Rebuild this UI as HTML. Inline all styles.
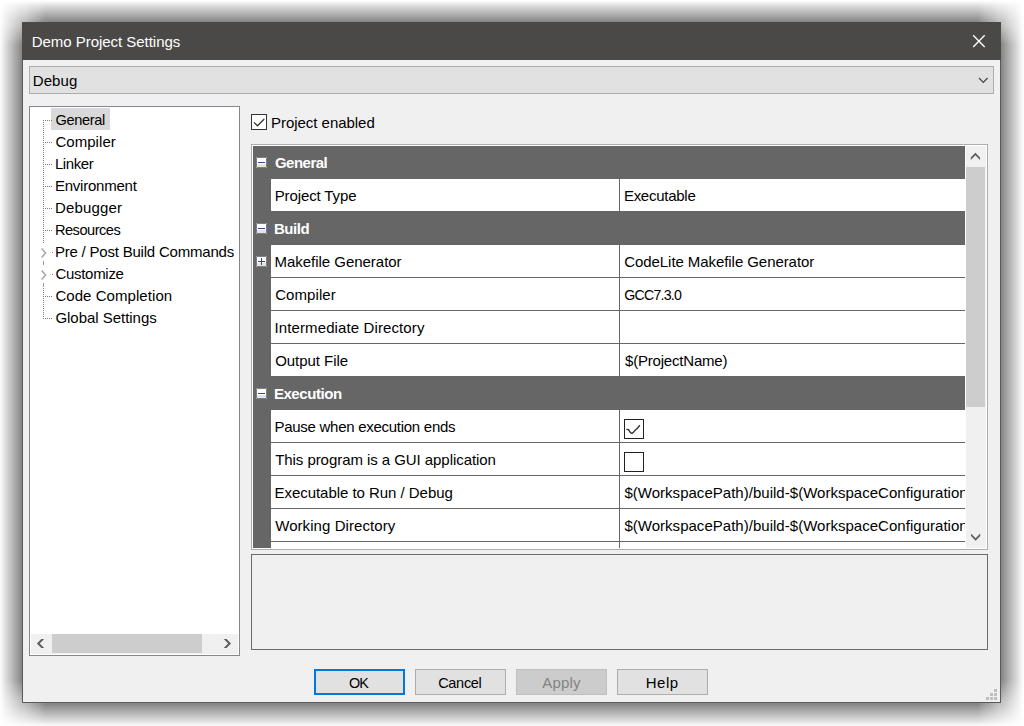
<!DOCTYPE html>
<html lang="en">
<head>
<meta charset="utf-8">
<title>Demo Project Settings</title>
<style>
html,body{margin:0;padding:0;background:#fff;}
body{width:1024px;height:726px;position:relative;overflow:hidden;
  font-family:"Liberation Sans",sans-serif;font-size:15.0px;color:#000;}
*{box-sizing:border-box;}
.win *{position:absolute;}
.win{position:absolute;left:22px;top:22px;width:979px;height:681px;background:#f0f0f0;
  border:1px solid #5c5a58;border-top:none;
}
.shadow{position:absolute;left:0;top:0;width:1024px;height:726px;background:linear-gradient(to right,rgba(0,0,0,0.000) -1.0px,rgba(0,0,0,0.040) 1.5px,rgba(0,0,0,0.135) 5.5px,rgba(0,0,0,0.255) 11.5px,rgba(0,0,0,0.360) 16.5px,rgba(0,0,0,0.465) 21.5px,rgba(0,0,0,0.470) 22.5px,rgba(0,0,0,0.475) 23.5px,rgba(0,0,0,0.580) 28.5px,rgba(0,0,0,0.685) 33.5px,rgba(0,0,0,0.805) 39.5px,rgba(0,0,0,0.900) 43.5px,rgba(0,0,0,0.940) 46.0px,rgba(0,0,0,0.940) 977.0px,rgba(0,0,0,0.900) 979.5px,rgba(0,0,0,0.805) 983.5px,rgba(0,0,0,0.685) 989.5px,rgba(0,0,0,0.580) 994.5px,rgba(0,0,0,0.475) 999.5px,rgba(0,0,0,0.470) 1000.5px,rgba(0,0,0,0.465) 1001.5px,rgba(0,0,0,0.360) 1006.5px,rgba(0,0,0,0.255) 1011.5px,rgba(0,0,0,0.135) 1017.5px,rgba(0,0,0,0.040) 1021.5px,rgba(0,0,0,0.000) 1024.0px);-webkit-mask-image:linear-gradient(to bottom,rgba(0,0,0,0.000) 0.3px,rgba(0,0,0,0.048) 2.5px,rgba(0,0,0,0.138) 5.5px,rgba(0,0,0,0.271) 11.5px,rgba(0,0,0,0.383) 16.5px,rgba(0,0,0,0.495) 21.5px,rgba(0,0,0,0.500) 22.5px,rgba(0,0,0,0.505) 23.5px,rgba(0,0,0,0.617) 28.5px,rgba(0,0,0,0.729) 33.5px,rgba(0,0,0,0.862) 39.5px,rgba(0,0,0,0.952) 42.5px,rgba(0,0,0,1.000) 44.7px,rgba(0,0,0,1.000) 680.0px,rgba(0,0,0,0.957) 682.5px,rgba(0,0,0,0.856) 686.5px,rgba(0,0,0,0.729) 692.5px,rgba(0,0,0,0.617) 697.5px,rgba(0,0,0,0.505) 702.5px,rgba(0,0,0,0.500) 703.5px,rgba(0,0,0,0.495) 704.5px,rgba(0,0,0,0.383) 709.5px,rgba(0,0,0,0.271) 714.5px,rgba(0,0,0,0.144) 720.5px,rgba(0,0,0,0.043) 724.5px,rgba(0,0,0,0.000) 727.0px);mask-image:linear-gradient(to bottom,rgba(0,0,0,0.000) 0.3px,rgba(0,0,0,0.048) 2.5px,rgba(0,0,0,0.138) 5.5px,rgba(0,0,0,0.271) 11.5px,rgba(0,0,0,0.383) 16.5px,rgba(0,0,0,0.495) 21.5px,rgba(0,0,0,0.500) 22.5px,rgba(0,0,0,0.505) 23.5px,rgba(0,0,0,0.617) 28.5px,rgba(0,0,0,0.729) 33.5px,rgba(0,0,0,0.862) 39.5px,rgba(0,0,0,0.952) 42.5px,rgba(0,0,0,1.000) 44.7px,rgba(0,0,0,1.000) 680.0px,rgba(0,0,0,0.957) 682.5px,rgba(0,0,0,0.856) 686.5px,rgba(0,0,0,0.729) 692.5px,rgba(0,0,0,0.617) 697.5px,rgba(0,0,0,0.505) 702.5px,rgba(0,0,0,0.500) 703.5px,rgba(0,0,0,0.495) 704.5px,rgba(0,0,0,0.383) 709.5px,rgba(0,0,0,0.271) 714.5px,rgba(0,0,0,0.144) 720.5px,rgba(0,0,0,0.043) 724.5px,rgba(0,0,0,0.000) 727.0px);}
.pg{left:-23px;top:-22px;width:1024px;height:726px;}
i{display:block;}
.title{left:22px;top:22px;width:979px;height:38px;background:#4b4947;}
.t{white-space:nowrap;line-height:20px;height:20px;}
.combo{left:29px;top:66px;width:965px;height:28px;background:#e1e1e1;border:1px solid #adadad;}
.tree{left:29px;top:106px;width:211px;height:550px;background:#fff;border:1px solid #828790;}
.sel{left:51px;top:108px;width:59px;height:22px;background:#d9d9d9;}
.vd{width:1px;background:repeating-linear-gradient(to bottom,#808080 0,#808080 1px,transparent 1px,transparent 2px);}
.hd{height:1px;background:repeating-linear-gradient(to right,#808080 0,#808080 1px,transparent 1px,transparent 2px);}
.dot{width:1px;height:1px;background:#808080;}
.dash{width:1px;background:#9a9a9a;}
.hsb{left:31px;top:634px;width:207px;height:20px;background:#f0f0f0;}
.hsb .th{left:21px;top:0;width:150px;height:19px;background:#cdcdcd;}
.chk{left:251px;top:114px;width:16px;height:16px;background:#fff;border:1px solid #333;}
.grid{left:251px;top:144px;width:737px;height:406px;background:#fff;border:1px solid #abadb3;}
.gin{left:253px;top:146px;width:712px;height:402px;background:#666;overflow:hidden;}
.row{left:0;width:712px;height:33px;background:#666;}
.row .lab{left:18px;top:0;width:348px;height:32px;background:#fff;overflow:hidden;}
.row .val{left:367px;top:0;width:345px;height:32px;background:#fff;overflow:hidden;}
.cat{left:0;width:712px;height:33px;background:#666;}
.ex{left:3px;top:11px;}
.cb{left:4px;top:9px;width:20px;height:20px;border:1px solid #222;background:#fff;}
.cb svg{left:-1px;top:-1px;}
.vsb{left:966px;top:146px;width:20px;height:402px;background:#f0f0f0;}
.vsb .th{left:0;top:21px;width:19px;height:240px;background:#cdcdcd;}
.desc{left:251px;top:554px;width:737px;height:96px;border:1px solid #6b6b6b;background:#f0f0f0;}
.btn{top:669px;width:91px;height:26px;background:#e1e1e1;border:1px solid #adadad;}
.grip i{width:3px;height:3px;background:#bfbfbf;}
@supports not ((mask-image:linear-gradient(#000,#000)) or (-webkit-mask-image:linear-gradient(#000,#000))){.shadow{position:absolute;left:0;top:0;width:1024px;height:726px;background:linear-gradient(to right,rgba(0,0,0,0.000) -1.0px,rgba(0,0,0,0.040) 1.5px,rgba(0,0,0,0.135) 5.5px,rgba(0,0,0,0.255) 11.5px,rgba(0,0,0,0.360) 16.5px,rgba(0,0,0,0.465) 21.5px,rgba(0,0,0,0.470) 22.5px,rgba(0,0,0,0.475) 23.5px,rgba(0,0,0,0.580) 28.5px,rgba(0,0,0,0.685) 33.5px,rgba(0,0,0,0.805) 39.5px,rgba(0,0,0,0.900) 43.5px,rgba(0,0,0,0.940) 46.0px,rgba(0,0,0,0.940) 977.0px,rgba(0,0,0,0.900) 979.5px,rgba(0,0,0,0.805) 983.5px,rgba(0,0,0,0.685) 989.5px,rgba(0,0,0,0.580) 994.5px,rgba(0,0,0,0.475) 999.5px,rgba(0,0,0,0.470) 1000.5px,rgba(0,0,0,0.465) 1001.5px,rgba(0,0,0,0.360) 1006.5px,rgba(0,0,0,0.255) 1011.5px,rgba(0,0,0,0.135) 1017.5px,rgba(0,0,0,0.040) 1021.5px,rgba(0,0,0,0.000) 1024.0px);-webkit-mask-image:linear-gradient(to bottom,rgba(0,0,0,0.000) 0.3px,rgba(0,0,0,0.048) 2.5px,rgba(0,0,0,0.138) 5.5px,rgba(0,0,0,0.271) 11.5px,rgba(0,0,0,0.383) 16.5px,rgba(0,0,0,0.495) 21.5px,rgba(0,0,0,0.500) 22.5px,rgba(0,0,0,0.505) 23.5px,rgba(0,0,0,0.617) 28.5px,rgba(0,0,0,0.729) 33.5px,rgba(0,0,0,0.862) 39.5px,rgba(0,0,0,0.952) 42.5px,rgba(0,0,0,1.000) 44.7px,rgba(0,0,0,1.000) 680.0px,rgba(0,0,0,0.957) 682.5px,rgba(0,0,0,0.856) 686.5px,rgba(0,0,0,0.729) 692.5px,rgba(0,0,0,0.617) 697.5px,rgba(0,0,0,0.505) 702.5px,rgba(0,0,0,0.500) 703.5px,rgba(0,0,0,0.495) 704.5px,rgba(0,0,0,0.383) 709.5px,rgba(0,0,0,0.271) 714.5px,rgba(0,0,0,0.144) 720.5px,rgba(0,0,0,0.043) 724.5px,rgba(0,0,0,0.000) 727.0px);mask-image:linear-gradient(to bottom,rgba(0,0,0,0.000) 0.3px,rgba(0,0,0,0.048) 2.5px,rgba(0,0,0,0.138) 5.5px,rgba(0,0,0,0.271) 11.5px,rgba(0,0,0,0.383) 16.5px,rgba(0,0,0,0.495) 21.5px,rgba(0,0,0,0.500) 22.5px,rgba(0,0,0,0.505) 23.5px,rgba(0,0,0,0.617) 28.5px,rgba(0,0,0,0.729) 33.5px,rgba(0,0,0,0.862) 39.5px,rgba(0,0,0,0.952) 42.5px,rgba(0,0,0,1.000) 44.7px,rgba(0,0,0,1.000) 680.0px,rgba(0,0,0,0.957) 682.5px,rgba(0,0,0,0.856) 686.5px,rgba(0,0,0,0.729) 692.5px,rgba(0,0,0,0.617) 697.5px,rgba(0,0,0,0.505) 702.5px,rgba(0,0,0,0.500) 703.5px,rgba(0,0,0,0.495) 704.5px,rgba(0,0,0,0.383) 709.5px,rgba(0,0,0,0.271) 714.5px,rgba(0,0,0,0.144) 720.5px,rgba(0,0,0,0.043) 724.5px,rgba(0,0,0,0.000) 727.0px);}
</style>
</head>
<body>
<div class="shadow"></div>
<div class="win"><div class="pg">

<div class="title"></div>
<span class="t" style="left:31.70px;top:31.80px;letter-spacing:-0.032px;color:#fff;">Demo Project Settings</span>
<svg style="left:971px;top:33px" width="15" height="15" viewBox="0 0 15 15"><path d="M2.15 2.35 L13.7 13.9 M13.7 2.35 L2.15 13.9" stroke="#fff" stroke-width="1.35" fill="none"/></svg>

<div class="combo"></div>
<span class="t" style="left:32.70px;top:70.80px;letter-spacing:0.110px;">Debug</span>
<svg style="left:977px;top:76px" width="12" height="8" viewBox="0 0 12 8"><path d="M2.0 2.0 L6.3 6.4 L10.6 2.0" stroke="#444" stroke-width="1.2" fill="none"/></svg>

<div class="tree"></div>
<div class="sel"></div>
<i class="vd" style="left:43px;top:120px;height:123px"></i>
<i class="hd" style="left:43px;top:120px;width:9px"></i>
<i class="hd" style="left:43px;top:142px;width:9px"></i>
<i class="hd" style="left:43px;top:164px;width:9px"></i>
<i class="hd" style="left:43px;top:186px;width:9px"></i>
<i class="hd" style="left:43px;top:208px;width:9px"></i>
<i class="hd" style="left:43px;top:230px;width:9px"></i>
<i class="dot" style="left:52px;top:252px"></i><i class="dot" style="left:52px;top:274px"></i>
<i class="dash" style="left:43px;top:261px;height:4px"></i><i class="dash" style="left:43px;top:283px;height:4px"></i>
<i class="vd" style="left:43px;top:288px;height:31px"></i>
<i class="hd" style="left:43px;top:296px;width:9px"></i><i class="hd" style="left:43px;top:318px;width:9px"></i>
<svg style="left:39px;top:247px" width="10" height="12" viewBox="0 0 10 12"><path d="M2.6 1.6 L6.6 6 L2.6 10.4" stroke="#a6a6a6" stroke-width="1.5" fill="none"/></svg>
<svg style="left:39px;top:269px" width="10" height="12" viewBox="0 0 10 12"><path d="M2.6 1.6 L6.6 6 L2.6 10.4" stroke="#a6a6a6" stroke-width="1.5" fill="none"/></svg>
<span class="t" style="left:55.40px;top:109.94px;letter-spacing:-0.346px;font-size:14.6px;">General</span>
<span class="t" style="left:55.40px;top:131.80px;letter-spacing:0.054px;">Compiler</span>
<span class="t" style="left:54.90px;top:153.80px;letter-spacing:-0.412px;">Linker</span>
<span class="t" style="left:54.90px;top:175.80px;letter-spacing:-0.224px;">Environment</span>
<span class="t" style="left:54.90px;top:197.80px;letter-spacing:0.173px;">Debugger</span>
<span class="t" style="left:54.90px;top:219.94px;letter-spacing:-0.482px;font-size:14.6px;">Resources</span>
<span class="t" style="left:54.90px;top:241.80px;letter-spacing:-0.204px;">Pre / Post Build Commands</span>
<span class="t" style="left:55.40px;top:263.80px;letter-spacing:-0.289px;">Customize</span>
<span class="t" style="left:55.40px;top:285.80px;letter-spacing:0.060px;">Code Completion</span>
<span class="t" style="left:55.40px;top:307.80px;letter-spacing:-0.030px;">Global Settings</span>
<div class="hsb"><i class="th"></i>
<svg style="left:0;top:0" width="207" height="20" viewBox="0 0 207 20"><polygon points="10.35,5.00 5.90,9.45 10.35,13.90 13.15,13.90 8.70,9.45 13.15,5.00" fill="#5c5c5c"/><polygon points="195.55,5.00 200.00,9.45 195.55,13.90 192.75,13.90 197.20,9.45 192.75,5.00" fill="#5c5c5c"/></svg>
</div>

<i class="chk"><svg style="left:0;top:0" width="14" height="14" viewBox="0 0 14 14"><path d="M1.9 7.4 L5.5 10.8 L12.3 4.0" stroke="#333" stroke-width="1.25" fill="none"/></svg></i>
<span class="t" style="left:271.00px;top:112.80px;letter-spacing:-0.035px;">Project enabled</span>

<div class="grid"></div>
<div class="gin">
<div class="cat" style="top:0px"><svg class="ex" width="11" height="11" viewBox="0 0 11 11" shape-rendering="crispEdges"><rect width="11" height="11" fill="#7e7e7e"/><path d="M0 0h1v1h-1zM10 0h1v1h-1zM0 10h1v1h-1zM10 10h1v1h-1z" fill="#a4a4a4"/><rect x="1" y="1" width="9" height="9" fill="#fff"/><rect x="1" y="7" width="9" height="3" fill="#e4e4e4"/><rect x="2" y="5" width="7" height="1" fill="#36479c"/></svg><span class="t" style="left:21.90px;top:6.90px;letter-spacing:-0.499px;font-weight:bold;color:#fff;">General</span></div>
<div class="row" style="top:33px"><div class="lab"><span class="t" style="left:3.70px;top:6.90px;letter-spacing:-0.112px;">Project Type</span></div><div class="val"><span class="t" style="left:3.90px;top:6.90px;letter-spacing:-0.264px;">Executable</span></div></div>
<div class="cat" style="top:66px"><svg class="ex" width="11" height="11" viewBox="0 0 11 11" shape-rendering="crispEdges"><rect width="11" height="11" fill="#7e7e7e"/><path d="M0 0h1v1h-1zM10 0h1v1h-1zM0 10h1v1h-1zM10 10h1v1h-1z" fill="#a4a4a4"/><rect x="1" y="1" width="9" height="9" fill="#fff"/><rect x="1" y="7" width="9" height="3" fill="#e4e4e4"/><rect x="2" y="5" width="7" height="1" fill="#36479c"/></svg><span class="t" style="left:20.90px;top:6.90px;letter-spacing:-0.408px;font-weight:bold;color:#fff;">Build</span></div>
<div class="row" style="top:99px"><svg class="ex" width="11" height="11" viewBox="0 0 11 11" shape-rendering="crispEdges"><rect width="11" height="11" fill="#7e7e7e"/><path d="M0 0h1v1h-1zM10 0h1v1h-1zM0 10h1v1h-1zM10 10h1v1h-1z" fill="#a4a4a4"/><rect x="1" y="1" width="9" height="9" fill="#fff"/><rect x="1" y="7" width="9" height="3" fill="#e4e4e4"/><rect x="2" y="5" width="7" height="1" fill="#36479c"/><rect x="5" y="2" width="1" height="7" fill="#36479c"/></svg><div class="lab"><span class="t" style="left:3.50px;top:6.90px;letter-spacing:-0.027px;">Makefile Generator</span></div><div class="val"><span class="t" style="left:4.25px;top:6.90px;letter-spacing:-0.068px;">CodeLite Makefile Generator</span></div></div>
<div class="row" style="top:132px"><div class="lab"><span class="t" style="left:4.20px;top:6.90px;letter-spacing:0.069px;">Compiler</span></div><div class="val"><span class="t" style="left:4.20px;top:7.18px;letter-spacing:-0.770px;font-size:14.2px;">GCC7.3.0</span></div></div>
<div class="row" style="top:165px"><div class="lab"><span class="t" style="left:3.50px;top:6.90px;letter-spacing:0.112px;">Intermediate Directory</span></div><div class="val"></div></div>
<div class="row" style="top:198px"><div class="lab"><span class="t" style="left:4.20px;top:6.90px;letter-spacing:-0.052px;">Output File</span></div><div class="val"><span class="t" style="left:5.00px;top:6.90px;letter-spacing:-0.195px;">$(ProjectName)</span></div></div>
<div class="cat" style="top:231px"><svg class="ex" width="11" height="11" viewBox="0 0 11 11" shape-rendering="crispEdges"><rect width="11" height="11" fill="#7e7e7e"/><path d="M0 0h1v1h-1zM10 0h1v1h-1zM0 10h1v1h-1zM10 10h1v1h-1z" fill="#a4a4a4"/><rect x="1" y="1" width="9" height="9" fill="#fff"/><rect x="1" y="7" width="9" height="3" fill="#e4e4e4"/><rect x="2" y="5" width="7" height="1" fill="#36479c"/></svg><span class="t" style="left:20.90px;top:6.90px;letter-spacing:-0.440px;font-weight:bold;color:#fff;">Execution</span></div>
<div class="row" style="top:264px"><div class="lab"><span class="t" style="left:3.50px;top:6.90px;letter-spacing:-0.276px;">Pause when execution ends</span></div><div class="val"><i class="cb"><svg width="20" height="20" viewBox="0 0 20 20"><path d="M2.4 10.3 L4.5 10.6 Q6 13.8 8 14.4 Q9.5 13.5 11.4 10.9 L13.5 9.2 L15.9 6.2" stroke="#2a2a2a" stroke-width="1.3" fill="none"/></svg></i></div></div>
<div class="row" style="top:297px"><div class="lab"><span class="t" style="left:4.20px;top:6.90px;letter-spacing:-0.058px;">This program is a GUI application</span></div><div class="val"><i class="cb"></i></div></div>
<div class="row" style="top:330px"><div class="lab"><span class="t" style="left:3.50px;top:6.90px;letter-spacing:-0.039px;">Executable to Run / Debug</span></div><div class="val"><span class="t" style="left:4.40px;top:6.90px;letter-spacing:0.025px;">$(WorkspacePath)/build-$(WorkspaceConfiguration)/bin/$(OutputFile)</span></div></div>
<div class="row" style="top:363px"><div class="lab"><span class="t" style="left:4.20px;top:6.90px;letter-spacing:0.071px;">Working Directory</span></div><div class="val"><span class="t" style="left:4.40px;top:6.90px;letter-spacing:0.025px;">$(WorkspacePath)/build-$(WorkspaceConfiguration)/lib</span></div></div>
<div class="row" style="top:396px"><div class="lab"></div><div class="val"></div></div>
</div>
<div class="vsb"><i class="th"></i>
<svg style="left:0;top:0" width="20" height="402" viewBox="0 0 20 402"><polygon points="4.80,11.40 9.40,6.80 14.00,11.40 14.00,13.90 9.40,9.30 4.80,13.90" fill="#5c5c5c"/><polygon points="5.00,390.10 9.60,394.70 14.20,390.10 14.20,387.60 9.60,392.20 5.00,387.60" fill="#5c5c5c"/></svg>
</div>
<div class="desc"></div>

<div class="btn" style="left:314px;border:2px solid #0078d7"></div>
<div class="btn" style="left:415px"></div>
<div class="btn" style="left:516px;background:#ccc;border-color:#bfbfbf"></div>
<div class="btn" style="left:617px"></div>
<span class="t" style="left:349.00px;top:672.71px;letter-spacing:-0.993px;font-size:14.4px;">OK</span>
<span class="t" style="left:438.20px;top:672.68px;letter-spacing:-0.303px;font-size:14.5px;">Cancel</span>
<span class="t" style="left:542.30px;top:672.50px;letter-spacing:0.170px;color:#838383;">Apply</span>
<span class="t" style="left:645.80px;top:672.50px;letter-spacing:0.464px;">Help</span>

<div class="grip" style="left:986px;top:689px;width:12px;height:12px">
<i style="left:8px;top:0"></i>
<i style="left:4px;top:4px"></i><i style="left:8px;top:4px"></i>
<i style="left:0;top:8px"></i><i style="left:4px;top:8px"></i><i style="left:8px;top:8px"></i>
</div>

</div></div>
</body>
</html>
